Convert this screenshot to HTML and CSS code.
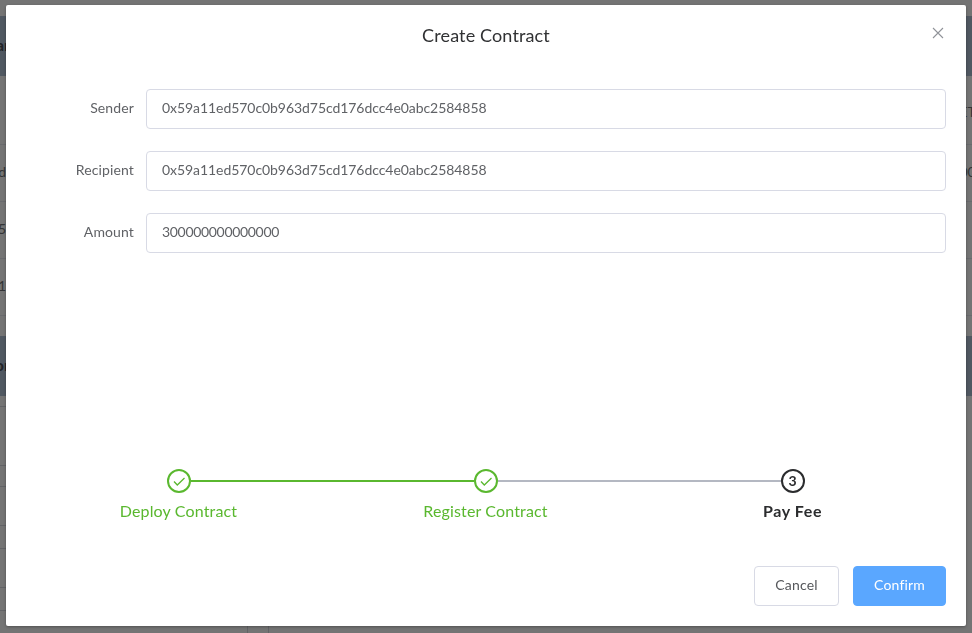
FILE: index.html
```html
<!DOCTYPE html>
<html lang="en">
<head>
<meta charset="utf-8">
<title>Create Contract</title>
<link rel="stylesheet" href="styles.css">
</head>
<body>
<div class="page" aria-hidden="true">
  <div class="band"><b class="start">ar</b></div>
  <div class="row tall"><span class="end">ET</span></div>
  <div class="row"><span class="start">d</span><span class="end">00</span></div>
  <div class="row"><span class="start">5</span></div>
  <div class="row"><span class="start">1</span></div>
  <div class="band second"><b class="start">or</b></div>
  <div class="log"><i class="h11"></i><i class="h59"></i><i class="h21"></i><i class="h39"></i><i class="h23"></i><i class="h39"></i><i class="h23"></i></div>
  <div class="columns"></div>
</div>
<div class="overlay">
  <main class="dialog" role="dialog" aria-labelledby="title">
    <header class="header">
      <h1 id="title">Create Contract</h1>
      <button class="close" aria-label="Close"><svg width="12" height="12" viewBox="0 0 12 12"><path d="M1 1 11 11M11 1 1 11"/></svg></button>
    </header>
    <form class="form">
      <label class="field"><span class="label">Sender</span><span class="input"><span class="hash">0x59a11ed570c0b963d75cd176dcc4e0abc2584858</span></span></label>
      <label class="field"><span class="label">Recipient</span><span class="input"><span class="hash">0x59a11ed570c0b963d75cd176dcc4e0abc2584858</span></span></label>
      <label class="field"><span class="label">Amount</span><span class="input"><span class="number">300000000000000</span></span></label>
    </form>
    <div class="steps">
      <div class="step">
        <div class="track"><span class="line none"></span><span class="dot"><svg width="14" height="14" viewBox="0 0 14 14"><path d="M2 7.5 5.3 11 12.5 4"/></svg></span><span class="line"></span></div>
        <div class="name">Deploy Contract</div>
      </div>
      <div class="step">
        <div class="track"><span class="line"></span><span class="dot"><svg width="14" height="14" viewBox="0 0 14 14"><path d="M2 7.5 5.3 11 12.5 4"/></svg></span><span class="line pending"></span></div>
        <div class="name">Register Contract</div>
      </div>
      <div class="step current">
        <div class="track"><span class="line pending"></span><span class="dot">3</span><span class="line none"></span></div>
        <div class="name">Pay Fee</div>
      </div>
    </div>
    <footer class="footer">
      <button class="button cancel">Cancel</button>
      <button class="button confirm">Confirm</button>
    </footer>
  </main>
</div>
</body>
</html>
```
FILE: styles.css
```css
* { box-sizing: border-box; }
body {
  margin: 0;
  height: 633px;
  overflow: hidden;
  background: #747474;
  color: #606266;
  font-family: Avenir, Lato, sans-serif;
  font-size: 14px;
}
button { font: inherit; }

.page { height: 633px; padding-top: 16px; overflow: hidden; color: #333436; }
.band {
  display: flex;
  align-items: center;
  height: 60px;
  padding-bottom: 4px;
  background: #505861;
  color: #222428;
  font-size: 16px;
}
.band.second { margin-top: 20px; }
.row {
  display: flex;
  align-items: center;
  height: 57px;
  padding-bottom: 3px;
  border-bottom: 1px solid #696a6d;
}
.row.tall { height: 69px; padding-top: 6px; }
.start { display: flex; justify-content: flex-end; width: 6px; }
.band .start { width: 10px; }
.end { margin-left: auto; width: 9px; display: flex; justify-content: center; }
.log { width: 6px; }
.log i { display: block; border-bottom: 1px solid #626366; }
.h11 { height: 11px; }
.h59 { height: 59px; }
.h21 { height: 21px; }
.h39 { height: 39px; }
.h23 { height: 23px; }
.columns {
  width: 22px;
  height: 23px;
  margin-left: 247px;
  border: solid #626366;
  border-width: 0 1px;
}

.overlay { position: fixed; inset: 0; padding: 5px 6px 7px; }
.dialog {
  display: flex;
  flex-direction: column;
  height: 621px;
  padding: 0 20px 20px;
  border-radius: 2px;
  background: #fff;
  box-shadow: 0 1px 3px rgba(0, 0, 0, 0.3);
}
.header {
  display: grid;
  grid-template-columns: 16px 1fr 16px;
  align-items: center;
  height: 60px;
}
h1 {
  grid-column: 2;
  margin: 0;
  color: #303133;
  font-size: 18px;
  font-weight: 400;
  line-height: 24px;
  letter-spacing: 0.13px;
  text-align: center;
}
.close {
  display: flex;
  justify-content: center;
  padding: 0;
  margin-top: -4px;
  border: 0;
  background: none;
}
svg { display: block; fill: none; stroke: #909399; stroke-width: 1.1; }

.form { display: flex; flex-direction: column; gap: 22px; padding-top: 24px; }
.field { display: flex; height: 40px; line-height: 38px; }
.label { width: 120px; padding-right: 12px; text-align: right; letter-spacing: 0.12px; }
.input { flex: 1; padding-left: 15px; border: 1px solid #d8dae5; border-radius: 4px; line-height: 36px; }
.hash { letter-spacing: -0.06px; }
.number { letter-spacing: -0.32px; }

.steps { display: grid; grid-template-columns: repeat(3, 307px); margin: auto 0 37px -1px; }
.step { color: #5ab82f; text-align: center; }
.track { display: flex; align-items: center; height: 24px; }
.line { flex: 1; height: 2px; background: #5ab82f; }
.line.pending { background: #b4b8c2; }
.line.none { background: none; }
.dot {
  display: flex;
  align-items: center;
  justify-content: center;
  width: 24px;
  height: 24px;
  border: 2px solid;
  border-radius: 50%;
  font-weight: 700;
  line-height: 20px;
}
.dot svg { stroke: #5ab82f; stroke-width: 1.3; }
.name { height: 36px; font-size: 16px; line-height: 36px; letter-spacing: 0.15px; }
.current { color: #2b2c2e; font-weight: 700; }
.current .name { letter-spacing: 0.6px; }

.footer { display: flex; justify-content: flex-end; gap: 14px; }
.button { height: 40px; padding: 0 0 3px; border: 1px solid #d8dae5; border-radius: 4px; background: #fff; color: #55575b; letter-spacing: 0.15px; }
.cancel { width: 85px; }
.confirm { width: 93px; border-color: #5aa7ff; background: #5aa7ff; color: #fff; }
```
